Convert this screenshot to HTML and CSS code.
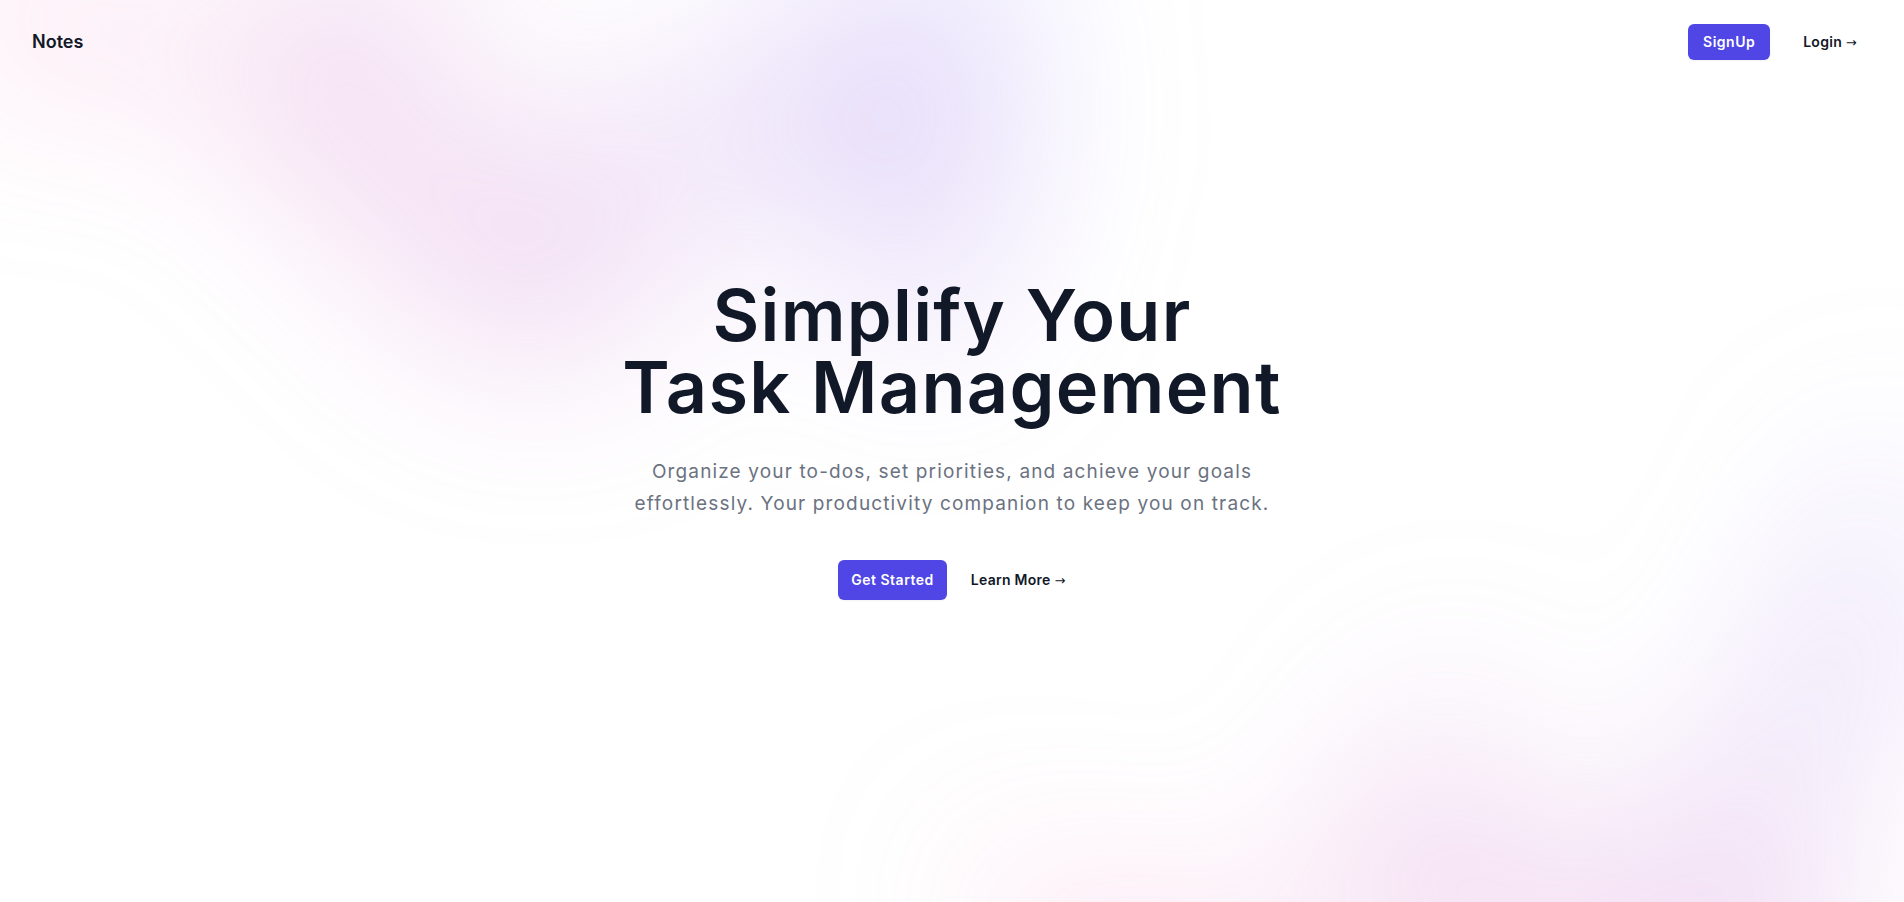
FILE: index.html
```html
<!DOCTYPE html>
<html lang="en">
<head>
<meta charset="utf-8">
<title>Notes</title>
<link rel="stylesheet" href="styles.css">
</head>
<body>
<div class="page">
  <div class="blob-wrap blob-wrap-top" aria-hidden="true"><div class="blob blob-top"></div></div>
  <header class="nav">
    <a class="brand" href="#">Notes</a>
    <div class="nav-actions">
      <a class="btn btn-primary" href="#">SignUp</a>
      <a class="text-link" href="#">Login <span class="arrow">→</span></a>
    </div>
  </header>
  <main class="hero">
    <h1 class="title">Simplify Your<br>Task Management</h1>
    <p class="lead">Organize your to-dos, set priorities, and achieve your goals effortlessly. Your productivity companion to keep you on track.</p>
    <div class="cta">
      <a class="btn btn-primary btn-lg" href="#">Get Started</a>
      <a class="text-link" href="#">Learn More <span class="arrow">→</span></a>
    </div>
  </main>
  <div class="blob-wrap blob-wrap-bottom" aria-hidden="true"><div class="blob blob-bottom"></div></div>
</div>
</body>
</html>
```

FILE: styles.css
```css
* { box-sizing: border-box; }
html, body { margin: 0; padding: 0; background: #ffffff; }
body {
  font-family: Inter, "Open Sans", "Liberation Sans", sans-serif;
  color: #111827;
  overflow: hidden;
}
a { text-decoration: none; color: inherit; }

.page {
  position: relative;
  isolation: isolate;
  min-height: 902px;
  overflow: hidden;
}

.nav {
  display: flex;
  align-items: center;
  justify-content: space-between;
  padding: 24px 47px 24px 32px;
}
.brand {
  font-size: 18px;
  font-weight: 600;
  color: #111827;
  line-height: 28px;
}
.nav-actions {
  display: flex;
  align-items: center;
  gap: 33px;
}

.btn {
  display: inline-block;
  border-radius: 6px;
  font-size: 14px;
  font-weight: 600;
  line-height: 20px;
  letter-spacing: 0.035em;
}
.btn-primary {
  background: #4f46e5;
  color: #ffffff;
  padding: 8px 15px;
  box-shadow: 0 1px 2px rgba(0,0,0,0.05);
}
.btn-lg { padding: 10px 13px; }

.text-link {
  font-size: 14px;
  font-weight: 600;
  line-height: 24px;
  color: #111827;
  letter-spacing: 0.02em;
}
.arrow { font-family: "DejaVu Sans", sans-serif; font-weight: 400; font-size: 13px; }

.hero {
  display: flex;
  flex-direction: column;
  align-items: center;
  text-align: center;
  padding-top: 195px;
}
.title {
  margin: 0;
  font-size: 72px;
  line-height: 72px;
  font-weight: 600;
  letter-spacing: 0.018em;
  color: #111827;
}
.lead {
  margin: 33px 0 0;
  max-width: 650px;
  font-size: 19px;
  line-height: 32px;
  letter-spacing: 0.06em;
  color: #6b7280;
  font-weight: 400;
}
.cta {
  margin-top: 40px;
  display: flex;
  align-items: center;
  gap: 24px;
}

.blob-wrap {
  position: absolute;
  left: 0;
  right: 0;
  z-index: -1;
  overflow: hidden;
  filter: blur(90px);
}
.blob-wrap-top { top: -320px; }
.blob-wrap-bottom { top: 420px; }
.blob {
  position: relative;
  width: 1155px;
  aspect-ratio: 1155 / 678;
  background: linear-gradient(to top right, #ff80b5, #9089fc);
  opacity: 0.3;
  clip-path: polygon(74.1% 44.1%, 100% 61.6%, 97.5% 26.9%, 85.5% 0.1%, 80.7% 2%, 72.5% 32.5%, 60.2% 62.4%, 52.4% 68.1%, 47.5% 58.3%, 45.2% 34.5%, 27.5% 76.7%, 0.1% 64.9%, 17.9% 100%, 27.6% 76.8%, 76.1% 97.7%, 74.1% 44.1%);
}
.blob-top {
  left: calc(50% - 480px);
  transform: translateX(-50%) rotate(30deg);
}
.blob-bottom {
  left: calc(50% + 576px);
  transform: translateX(-50%);
}
```
